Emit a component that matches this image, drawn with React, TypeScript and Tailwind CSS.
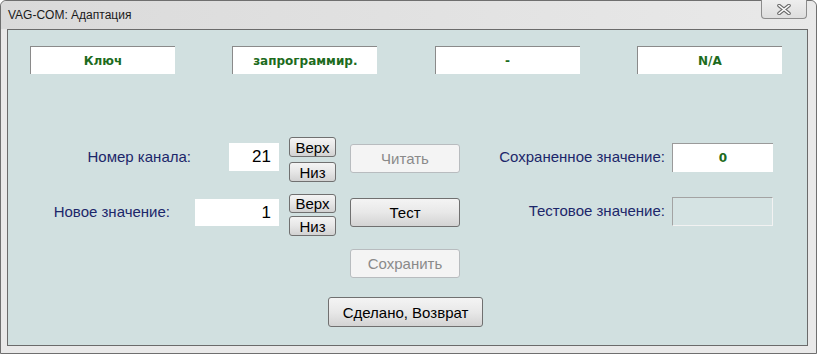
import React from "react";

const sans = "font-['Liberation_Sans',Arial,sans-serif]";

function StatusBox({ text }: { text: string }) {
  return (
    <div className="flex h-[28px] w-[145px] items-center justify-center border-t border-l border-t-[#8a8a8a] border-l-[#8a8a8a] bg-white font-['DejaVu_Sans',sans-serif] text-[12px] font-bold text-[#1d6b1d]">
      {text}
    </div>
  );
}

function SmallButton({ label, className = "" }: { label: string; className?: string }) {
  return (
    <button
      type="button"
      className={`flex w-[47px] items-center justify-center rounded-[3px] border border-[#707070] bg-linear-to-b from-[#f4f4f4] via-[#e6e6e6] to-[#d2d2d2] ${sans} text-[15px] leading-none text-black ${className}`}
    >
      {label}
    </button>
  );
}

function Button({
  label,
  disabled = false,
  className = "",
}: {
  label: string;
  disabled?: boolean;
  className?: string;
}) {
  return (
    <button
      type="button"
      disabled={disabled}
      className={`flex items-center justify-center rounded-[3px] border ${sans} text-[15px] leading-none ${
        disabled
          ? "border-[#b8bcbf] bg-[#f4f4f4] text-[#8a8a8a]"
          : "border-[#707070] bg-linear-to-b from-[#f4f4f4] via-[#e8e8e8] to-[#d3d3d3] text-black"
      } ${className}`}
    >
      {label}
    </button>
  );
}

export default function App() {
  return (
    <div className="h-[354px] w-[817px] overflow-hidden bg-white">
      <div className="flex h-[354px] w-[817px] flex-col rounded-t-[6px] border border-[#6f6f6f] bg-[#e9e9e9]">
        {/* title bar */}
        <div className="flex h-[28px] items-start rounded-t-[6px] bg-linear-to-r from-[#dadada] to-[#e9e9e9]">
          <div className={`flex h-[28px] items-center pl-[7px] ${sans} text-[12px] text-[#1a1a1a]`}>
            VAG-COM: Адаптация
          </div>
          <div className="flex-1" />
          <div className="mr-[9px] -mt-[1px] flex h-[19px] w-[46px] items-center justify-center rounded-b-[4px] border border-t-0 border-[#8c8c8c] bg-linear-to-b from-[#eeeeee] to-[#dedede]">
            <svg width="14" height="11" viewBox="0 0 14 11">
              <path d="M2 1.5 L12 9.5 M12 1.5 L2 9.5" stroke="#6a6a6a" strokeWidth="3.6" strokeLinecap="round" fill="none" />
              <path d="M2 1.5 L12 9.5 M12 1.5 L2 9.5" stroke="#ffffff" strokeWidth="1.6" strokeLinecap="round" fill="none" />
            </svg>
          </div>
        </div>

        {/* client area */}
        <div className="mx-[6px] flex h-[317px] w-[801px] flex-col border border-[#6b6b6b] bg-[#d1e0e0]">
          <div className="ml-[22px] mt-[16px] flex gap-[57.3px]">
            <StatusBox text="Ключ" />
            <StatusBox text="запрограммир." />
            <StatusBox text="-" />
            <StatusBox text="N/A" />
          </div>

          {/* channel row */}
          <div className="mt-[63px] flex h-[45px] items-start">
            <div className="flex w-[271px] items-start justify-end">
              <span className={`mt-[6px] mr-[38px] h-[28px] ${sans} text-[15px] leading-[28px] text-[#1c276a]`}>
                Номер канала:
              </span>
              <div className={`mt-[6px] flex h-[28px] w-[50px] items-center justify-end bg-white pr-[8px] ${sans} text-[17px] text-black`}>
                21
              </div>
            </div>
            <div className="ml-[10px] flex flex-col gap-[5px]">
              <SmallButton label="Верх" className="h-[20px]" />
              <SmallButton label="Низ" className="h-[20px]" />
            </div>
            <Button label="Читать" disabled className="ml-[14px] mt-[7px] h-[29px] w-[110px]" />
            <div className="flex flex-1 items-start justify-end pr-[34px]">
              <span className={`mt-[6px] mr-[7px] h-[28px] ${sans} text-[15px] leading-[28px] text-[#1c276a]`}>
                Сохраненное значение:
              </span>
              <div className="mt-[6px] flex h-[29px] w-[101px] items-center justify-center border-t border-l border-t-[#9a9a9a] border-l-[#9a9a9a] bg-white font-['DejaVu_Sans',sans-serif] text-[12px] font-bold text-[#1d6b1d]">
                0
              </div>
            </div>
          </div>

          {/* new value row */}
          <div className="mt-[10px] flex h-[44px] items-start">
            <div className="flex w-[271px] items-start justify-end">
              <span className={`mt-[6px] mr-[25px] h-[28px] ${sans} text-[15px] leading-[28px] text-[#1c276a]`}>
                Новое значение:
              </span>
              <div className={`mt-[7px] flex h-[27px] w-[84px] items-center justify-end bg-white pr-[8px] ${sans} text-[17px] text-black`}>
                1
              </div>
            </div>
            <div className="ml-[10px] mt-[2px] flex flex-col gap-[3px]">
              <SmallButton label="Верх" className="h-[19px]" />
              <SmallButton label="Низ" className="h-[20px]" />
            </div>
            <Button label="Тест" className="ml-[14px] mt-[6px] h-[29px] w-[110px]" />
            <div className="flex flex-1 items-start justify-end pr-[34px]">
              <span className={`mt-[5px] mr-[7px] h-[28px] ${sans} text-[15px] leading-[28px] text-[#1c276a]`}>
                Тестовое значение:
              </span>
              <div className="mt-[5px] h-[29px] w-[101px] border border-t-[#a3a3a3] border-l-[#a3a3a3] border-b-[#f2f2f2] border-r-[#f2f2f2] bg-[#d5e3e3]" />
            </div>
          </div>

          <Button label="Сохранить" disabled className="ml-[342px] mt-[13px] h-[29px] w-[110px]" />
          <Button label="Сделано, Возврат" className="ml-[320px] mt-[19px] h-[30px] w-[155px]" />
        </div>
      </div>
    </div>
  );
}
